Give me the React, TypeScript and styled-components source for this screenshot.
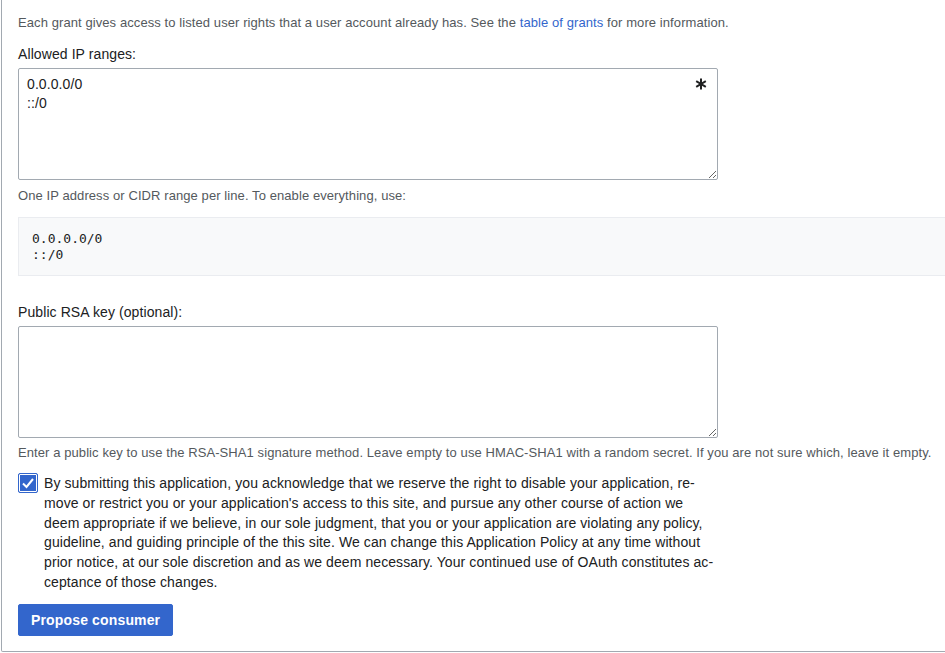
import React from "react";
import styled, { createGlobalStyle } from "styled-components";

const GlobalStyle = createGlobalStyle`
  html, body {
    margin: 0;
    padding: 0;
    background: #ffffff;
    overflow: hidden;
  }
  body {
    font-family: "Liberation Sans", Arial, sans-serif;
    color: #202122;
    font-size: 14px;
  }
`;

const Fieldset = styled.div`
  margin: 0 0 0 1px;
  width: 1100px;
  border: 1px solid #a2a9b1;
  border-top: none;
  border-radius: 0 0 2px 2px;
  padding: 13px 16px 15px 16px;
  box-sizing: border-box;
  display: flex;
  flex-direction: column;
`;

const Intro = styled.p`
  margin: 0;
  font-size: 13px;
  line-height: 20px;
  letter-spacing: 0.085px;
  color: #54595d;
`;

const Link = styled.a`
  color: #3366cc;
  text-decoration: none;
`;

const FieldLabel = styled.label<{ $top: number }>`
  display: block;
  margin-top: ${(p) => p.$top}px;
  font-size: 14px;
  line-height: 20px;
  letter-spacing: 0.09px;
  color: #202122;
`;

const FieldWrap = styled.div`
  position: relative;
  width: 700px;
  margin-top: 4px;
`;

const TextArea = styled.textarea`
  display: block;
  width: 700px;
  height: 112px;
  box-sizing: border-box;
  margin: 0;
  padding: 6px 8px;
  border: 1px solid #a2a9b1;
  border-radius: 2px;
  font-family: "Liberation Sans", Arial, sans-serif;
  font-size: 14px;
  line-height: 19px;
  letter-spacing: 0.09px;
  color: #202122;
  background: #ffffff;
  resize: both;
  outline: none;
`;

const Indicator = styled.span`
  position: absolute;
  top: 10px;
  right: 11px;
  width: 12px;
  height: 12px;
  display: flex;
  pointer-events: none;
`;

const Help = styled.div<{ $top: number }>`
  margin-top: ${(p) => p.$top}px;
  font-size: 13px;
  line-height: 18px;
  letter-spacing: 0.085px;
  color: #54595d;
`;

const Pre = styled.pre`
  margin: 12px 0 0 0;
  padding: 13px 13px 12px 13px;
  background: #f8f9fa;
  border: 1px solid #eaecf0;
  font-family: "DejaVu Sans Mono", "Liberation Mono", monospace;
  font-size: 13px;
  line-height: 16px;
  color: #202122;
`;

const CheckRow = styled.label`
  display: flex;
  align-items: flex-start;
  gap: 6px;
  margin-top: 11px;
  cursor: pointer;
`;

const CheckBox = styled.span`
  flex: none;
  width: 20px;
  height: 20px;
  box-sizing: border-box;
  border: 1px solid #3366cc;
  border-radius: 2px;
  background: #3366cc;
  box-shadow: inset 0 0 0 1px #ffffff;
  display: flex;
  align-items: center;
  justify-content: center;
`;

const CheckText = styled.span`
  font-size: 14px;
  line-height: 19.8px;
  letter-spacing: 0.09px;
  color: #202122;
  margin-top: 1px;
`;

const Button = styled.button`
  align-self: flex-start;
  margin-top: 11px;
  height: 32px;
  padding: 0 12px;
  border: 1px solid #3366cc;
  border-radius: 2px;
  background: #3366cc;
  color: #ffffff;
  font-family: "Liberation Sans", Arial, sans-serif;
  font-size: 14px;
  font-weight: bold;
  letter-spacing: 0.15px;
  cursor: pointer;
`;

const Asterisk = () => (
  <svg width="12" height="12" viewBox="0 0 12 12">
    <g stroke="#202122" strokeWidth="2" strokeLinecap="butt">
      <line x1="6" y1="0.5" x2="6" y2="11.5" />
      <line x1="1.2" y1="3.2" x2="10.8" y2="8.8" />
      <line x1="1.2" y1="8.8" x2="10.8" y2="3.2" />
    </g>
  </svg>
);

const Check = () => (
  <svg width="14" height="14" viewBox="0 0 14 14">
    <path d="M2 7.5 L5.5 11 L12 3" fill="none" stroke="#ffffff" strokeWidth="2" />
  </svg>
);

export default function App() {
  return (
    <>
      <GlobalStyle />
      <Fieldset>
        <Intro>
          Each grant gives access to listed user rights that a user account already has. See the{" "}
          <Link href="#">table of grants</Link> for more information.
        </Intro>

        <FieldLabel $top={11}>Allowed IP ranges:</FieldLabel>
        <FieldWrap>
          <TextArea defaultValue={"0.0.0.0/0\n::/0"} />
          <Indicator>
            <Asterisk />
          </Indicator>
        </FieldWrap>
        <Help $top={7}>One IP address or CIDR range per line. To enable everything, use:</Help>
        <Pre>{"0.0.0.0/0\n::/0"}</Pre>

        <FieldLabel $top={26}>Public RSA key (optional):</FieldLabel>
        <FieldWrap>
          <TextArea defaultValue="" />
        </FieldWrap>
        <Help $top={6}>
          Enter a public key to use the RSA-SHA1 signature method. Leave empty to use HMAC-SHA1 with a random
          secret. If you are not sure which, leave it empty.
        </Help>

        <CheckRow>
          <CheckBox>
            <Check />
          </CheckBox>
          <CheckText>
            By submitting this application, you acknowledge that we reserve the right to disable your application, re-
            <br />
            move or restrict you or your application's access to this site, and pursue any other course of action we
            <br />
            deem appropriate if we believe, in our sole judgment, that you or your application are violating any policy,
            <br />
            guideline, and guiding principle of the this site. We can change this Application Policy at any time without
            <br />
            prior notice, at our sole discretion and as we deem necessary. Your continued use of OAuth constitutes ac-
            <br />
            ceptance of those changes.
          </CheckText>
        </CheckRow>

        <Button type="button">Propose consumer</Button>
      </Fieldset>
    </>
  );
}
